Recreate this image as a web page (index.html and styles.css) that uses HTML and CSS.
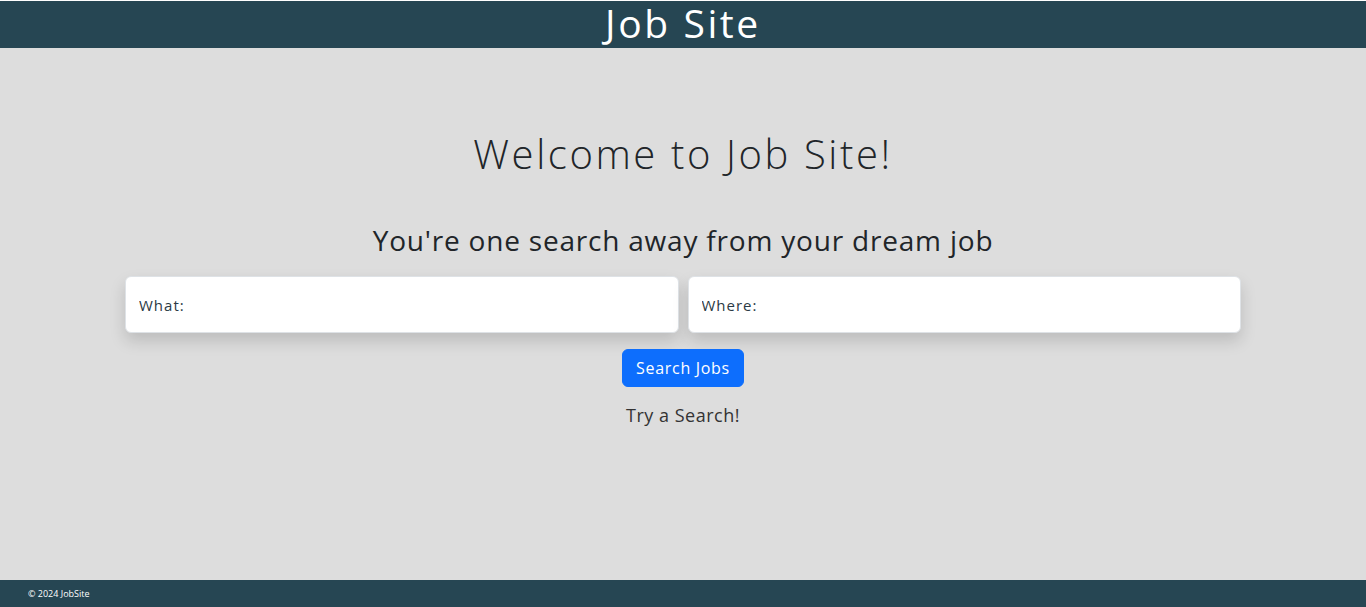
FILE: index.html
```html
<!DOCTYPE html>
<html lang="en">
<head>
<meta charset="utf-8">
<title>Job Site</title>
<link rel="stylesheet" href="styles.css">
</head>
<body>
<div class="page">
  <header class="topbar">
    <h1 class="brand">Job Site</h1>
  </header>
  <main class="main">
    <h2 class="welcome">Welcome to Job Site!</h2>
    <h3 class="tagline">You're one search away from your dream job</h3>
    <form class="search">
      <div class="fields">
        <label class="field"><input type="text" placeholder="What:"></label>
        <label class="field"><input type="text" placeholder="Where:"></label>
      </div>
      <button type="button" class="btn">Search Jobs</button>
    </form>
    <p class="hint">Try a Search!</p>
  </main>
  <footer class="footer">© 2024 JobSite</footer>
</div>
</body>
</html>
```
FILE: styles.css
```css
* { box-sizing: border-box; }
html, body { margin: 0; padding: 0; height: 100%; }
body {
  font-family: "Open Sans", "DejaVu Sans", sans-serif;
  background: #dddddd;
  color: #212529;
}
.page {
  min-height: 607px;
  display: flex;
  flex-direction: column;
  border-top: 1px solid #ffffff;
}
.topbar {
  background: #264653;
  height: 47px;
  display: flex;
  justify-content: center;
  align-items: flex-start;
}
.brand {
  margin: 0;
  color: #ffffff;
  font-weight: 400;
  font-size: 39px;
  line-height: 44px;
  letter-spacing: 2.6px;
}
.main {
  flex: 1;
  display: flex;
  flex-direction: column;
  align-items: center;
  padding-top: 82px;
}
.welcome {
  margin: 0;
  font-size: 40px;
  font-weight: 300;
  line-height: 48px;
  letter-spacing: 2.6px;
}
.tagline {
  margin: 45px 0 0;
  font-size: 28px;
  font-weight: 400;
  line-height: 34px;
  letter-spacing: 0.8px;
}
.search {
  margin-top: 19px;
  width: 1116px;
  display: flex;
  flex-direction: column;
  align-items: center;
}
.fields {
  width: 100%;
  display: flex;
  gap: 9px;
}
.field {
  flex: 1;
  display: block;
}
.field input {
  width: 100%;
  height: 57px;
  border: 1px solid #dee2e6;
  border-radius: 6px;
  background: #fff;
  box-shadow: 0 8px 16px rgba(0,0,0,0.15);
  padding: 0 13px;
  font-family: inherit;
  font-size: 15px;
  letter-spacing: 1px;
  color: #212529;
  outline: none;
}
.field input::placeholder { color: #2b3a45; opacity: 1; }
.btn {
  margin-top: 16px;
  background: #0d6efd;
  color: #fff;
  border: 1px solid #0d6efd;
  border-radius: 6px;
  height: 38px;
  padding: 0 13px;
  font-family: inherit;
  font-size: 16px;
  letter-spacing: 0.7px;
}
.hint {
  margin: 16px 0 0;
  font-size: 18px;
  line-height: 24px;
  letter-spacing: 0.5px;
  color: #333;
}
.footer {
  background: #264653;
  color: #fff;
  height: 27px;
  font-size: 9px;
  display: flex;
  align-items: center;
  padding-left: 28px;
}
```
